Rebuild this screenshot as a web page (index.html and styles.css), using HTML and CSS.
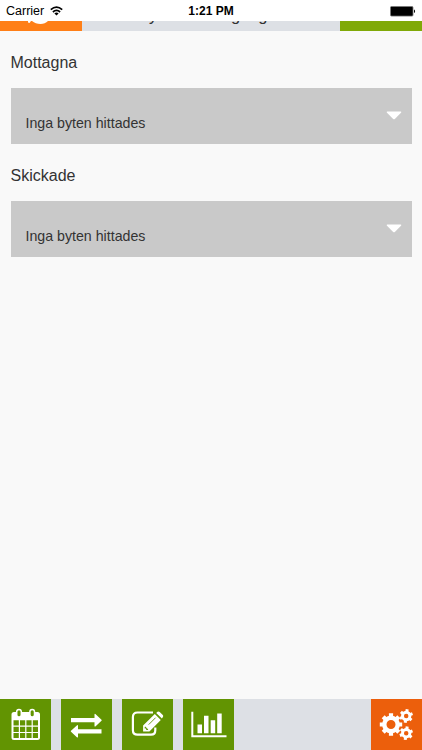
FILE: index.html
```
<!DOCTYPE html>
<html lang="sv">
<head>
<meta charset="utf-8">
<title>Byten</title>
<link rel="stylesheet" href="styles.css">
</head>
<body>
<div class="status">
  <div class="carrier"><span>Carrier</span>
    <svg width="13" height="10" viewBox="0 0 13 10" fill="none" stroke="#000" stroke-width="1.7"><path d="M.8 3.7Q6.5-1.5 12.2 3.7M2.9 6Q6.5 2.8 10.1 6"/><path d="M4.4 7.4Q6.5 5.7 8.6 7.4L6.5 9.6Z" fill="#000" stroke="none"/></svg>
  </div>
  <div class="clock">1:21 PM</div>
  <svg class="battery" width="26" height="11" viewBox="0 0 26 11"><rect x=".5" y=".5" width="22.5" height="9.6" rx="1" fill="#000" stroke="#777" stroke-width=".8"/><path d="M24 3.7h.7q.8 1.5 0 3H24z"/></svg>
</div>
<header class="header">
  <div class="back"><svg width="26" height="8" viewBox="0 0 26 8" fill="#fff"><path d="M6 0H22Q19 3 14.500 3Q9.500 3 6 0ZM2 0H5L3.500 2L2 1.500Z"/></svg></div>
  <h1 class="title"><span>Byten och tillgångar</span></h1>
  <div class="action"></div>
</header>
<main class="content">
  <section>
    <h2>Mottagna</h2>
    <div class="panel"><span>Inga byten hittades</span><svg width="16" height="9" viewBox="0 0 16 9"><path d="M1.200.5H14.800Q15.800.8 15 1.700L8.800 8Q8 8.700 7.200 8L1 1.700Q.2.8 1.200.5Z" fill="#fff"/></svg></div>
  </section>
  <section>
    <h2>Skickade</h2>
    <div class="panel"><span>Inga byten hittades</span><svg width="16" height="9" viewBox="0 0 16 9"><path d="M1.200.5H14.800Q15.800.8 15 1.700L8.800 8Q8 8.700 7.200 8L1 1.700Q.2.8 1.200.5Z" fill="#fff"/></svg></div>
  </section>
</main>
<nav class="tabs">
  <div class="tab"><svg viewBox="0 0 51 51"><path fill="#fff" fill-rule="evenodd" d="M14 13H37.500Q40 13 40 15.500V38.500Q40 41 37.500 41H14Q11.500 41 11.500 38.500V15.500Q11.500 13 14 13ZM13.500 21.300V26.500H18.800V21.300ZM20 21.300V26.500H25.200V21.300ZM26.400 21.300V26.500H31.600V21.300ZM32.800 21.300V26.500H38V21.300ZM13.500 27.700V32.900H18.800V27.700ZM20 27.700V32.900H25.200V27.700ZM26.400 27.700V32.900H31.600V27.700ZM32.800 27.700V32.900H38V27.700ZM13.500 34.100V39H18.800V34.100ZM20 34.100V39H25.200V34.100ZM26.400 34.100V39H31.600V34.100ZM32.800 34.100V39H38V34.100Z"/><rect x="16.700" y="10.500" width="4.600" height="7.500" rx="2.300" fill="#629402" stroke="#fff" stroke-width="1.500"/><rect x="29.900" y="10.500" width="4.600" height="7.500" rx="2.300" fill="#629402" stroke="#fff" stroke-width="1.500"/></svg></div>
  <div class="tab"><svg viewBox="0 0 51 51" fill="#fff"><path d="M10 19H33.500V15.200Q33.700 14.600 34.400 15L40.500 20.700Q41 21.200 40.500 21.700L34.400 27.400Q33.700 27.800 33.500 27.200V23.300H10ZM40.500 30.200H17V26.500Q16.800 25.800 16.100 26.200L10 31.800Q9.500 32.300 10 32.800L16.100 38.400Q16.800 38.800 17 38.100V34.500H40.500Z"/></svg></div>
  <div class="tab"><svg viewBox="0 0 51 51"><path d="M31 13.500H15.500Q10.900 13.500 10.900 18V31.300Q10.900 35.700 15.500 35.700H29Q33.300 35.700 33.300 31.300V28.500" fill="none" stroke="#fff" stroke-width="2.200"/><path fill="#fff" d="M32.800 15.100L38.800 21L27.400 32.500H21.100V26.600ZM34.200 14L35.500 12.800Q36.700 12 37.700 13L40.800 16Q41.700 17 40.900 18L39.900 19.600Z"/><path d="M23.200 27.400L26.300 30.500L25.600 31H24.200V29.500H22.700V28.100Z" fill="#629402"/><path d="M26.700 25.600L33.600 18.700" stroke="#629402" stroke-width=".9"/></svg></div>
  <div class="tab"><svg viewBox="0 0 51 51"><path d="M9.300 12.800V37.300H43.500" fill="none" stroke="#fff" stroke-width="2"/><path fill="#fff" d="M14.500 25.500H19V34.300H14.500ZM21 16.800H25.500V34.300H21ZM27.700 21.200H32.200V34.300H27.700ZM34.200 14.500H38.700V34.300H34.200Z"/></svg></div>
  <div class="tab settings"><svg viewBox="0 0 51 51" fill="none" stroke="#fff">
    <circle cx="20" cy="25.500" r="6.700" stroke-width="4.400"/>
    <path stroke-width="4.200" d="M20 14.300V18M20 33V36.700M8.800 25.500H12.500M27.500 25.500H31.200M12.200 17.700L14.700 20.200M25.300 30.800L27.800 33.300M12.200 33.300L14.700 30.800M25.300 20.200L27.800 17.700"/>
    <g id="gear"><circle cx="35.200" cy="17" r="3.700" stroke-width="2.900"/><path stroke-width="3" d="M36.200 10.300L35.800 13M34.600 21L34.200 23.700M29.900 12.900L32 14.700M38.400 19.300L40.500 21.100M28.900 19.300L31.500 18.300M38.900 15.700L41.500 14.700"/></g>
    <use href="#gear" y="17.200"/>
  </svg></div>
</nav>
</body>
</html>
```
FILE: styles.css
```
* { box-sizing: border-box; }
body {
  margin: 0;
  height: 750px;
  display: flex;
  flex-direction: column;
  overflow: hidden;
  background: #f9f9f9;
  color: #333;
  font-family: "Liberation Sans", Arial, sans-serif;
}
.status {
  flex: none;
  height: 21px;
  padding: 0 6px 0 6px;
  display: grid;
  grid-template-columns: 1fr auto 1fr;
  align-items: center;
  background: #fff;
  color: #000;
  font-size: 12.500px;
  line-height: 21px;
}
.carrier { display: flex; align-items: center; gap: 6px; padding-top: 1px; }
.carrier svg { margin-top: -1px; }
.clock { font-weight: bold; font-size: 12px; padding-top: 1px; }
.battery { justify-self: end; }
.header {
  flex: none;
  height: 10px;
  display: flex;
  background: #dde0e5;
  overflow: hidden;
}
.back { width: 82px; padding-left: 26px; background: #ff7f17; }
.back svg { display: block; }
.action { width: 82px; background: #80a908; }
.title {
  flex: 1;
  margin: 0;
  display: flex;
  align-items: flex-end;
  justify-content: center;
  font-size: 16.400px;
  font-weight: normal;
  line-height: 20px;
  padding: 0 2px 6px 0;
}
.content { flex: 1; padding: 22px 10px 0 10.500px; }
h2 {
  margin: 0 0 15px;
  font-size: 16px;
  font-weight: normal;
  line-height: 20px;
}
.panel {
  height: 56px;
  margin-bottom: 22px;
  padding: 14px 10px 0 15px;
  display: flex;
  justify-content: space-between;
  align-items: center;
  background: #c9c9c9;
  font-size: 14.200px;
}
.panel svg { margin-bottom: 15px; }
.tabs {
  flex: none;
  height: 51px;
  display: flex;
  gap: 10px;
  background: #dde0e5;
}
.tab { width: 51px; height: 51px; background: #629402; }
.tab svg { display: block; width: 51px; height: 51px; }
.settings { margin-left: auto; background: #ec5f0c; }
```
